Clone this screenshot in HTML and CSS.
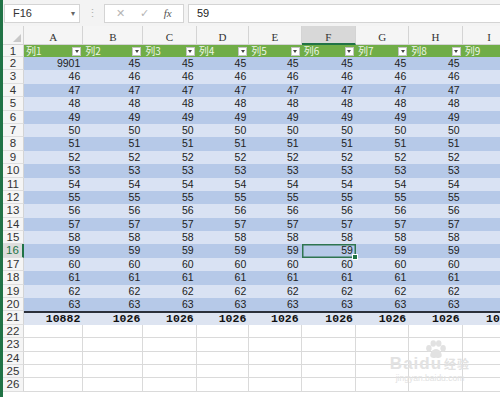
FILE: index.html
```html
<!DOCTYPE html>
<html lang="zh">
<head>
    <meta charset="UTF-8">
    <title>Sheet</title>
    <link rel="stylesheet" href="styles.css">
</head>
<body>
<div class="app">
    <!-- formula bar -->
    <div class="topbar">
        <div class="namebox"><span>F16</span><span class="caret">&#9662;</span></div>
        <div class="grip">&#8942;</div>
        <div class="fxbox"><span>&#10005;</span><span>&#10003;</span><i>fx</i></div>
        <div class="formula">59</div>
    </div>
    <!-- grid is filled by the script below -->
    <div class="sheet" id="sheet"></div>
    <div class="watermark">
        <svg class="paw" width="24" height="20" viewBox="0 0 22 18">
            <ellipse cx="4.5" cy="7.5" rx="2.5" ry="3" fill="#e2e2e2"/>
            <ellipse cx="8.5" cy="3" rx="2.5" ry="3" fill="#e2e2e2"/>
            <ellipse cx="13.5" cy="3" rx="2.5" ry="3" fill="#e2e2e2"/>
            <ellipse cx="17.5" cy="7.5" rx="2.5" ry="3" fill="#e2e2e2"/>
            <path d="M11 8 C7 8 5 13 6 15 C7 17 10 16 11 16 C12 16 15 17 16 15 C17 13 15 8 11 8 Z" fill="#e2e2e2"/>
        </svg>
        <div class="wm-main">Bai<span class="du">du</span><span class="jy">经验</span></div>
        <div class="wm-sub">jingyan.baidu.com</div>
    </div>
</div>
<script>
    const letters = ["A", "B", "C", "D", "E", "F", "G", "H", "I"];
    const sheet = document.getElementById("sheet");

    function cell(cls, text) {
        const d = document.createElement("div");
        d.className = cls;
        if (text !== undefined) d.textContent = text;
        sheet.appendChild(d);
        return d;
    }

    // column letters
    const corner = cell("corner");
    corner.innerHTML = '<svg width="8" height="8" viewBox="0 0 8 8"><path d="M8 0 L8 8 L0 8 Z" fill="#c8c8c8"/></svg>';
    letters.forEach(function (l) {
        cell(l === "F" ? "colhead active" : "colhead", l);
    });

    for (let r = 1; r <= 26; r++) {
        cell(r === 16 ? "rowhead active" : "rowhead", r);
        letters.forEach(function (l, i) {
            if (r === 1) {
                const h = cell("th");
                h.innerHTML = '<span>列' + (i + 1) + '</span><b class="drop"></b>';
            } else if (r <= 20) {
                let v = 43 + r;
                if (r === 2) v = i === 0 ? 9901 : 45;
                let cls = r % 2 === 0 ? "td dark" : "td light";
                if (r === 16 && l === "F") cls += " sel";
                cell(cls, l === "I" ? "" : v);
            } else if (r === 21) {
                cell("td total", i === 0 ? 10882 : 1026);
            } else {
                cell("td empty");
            }
        });
    }
</script>
</body>
</html>
```

FILE: styles.css
```css
body {
    margin: 0;
    background: #fff;
    font-family: "Liberation Sans", Arial, sans-serif;
}

.app {
    position: relative;
    width: 497px;
    height: 397px;
    overflow: hidden;
    border-left: 3px solid #217346;
}

/* formula bar */
.topbar {
    height: 26px;
    display: flex;
    align-items: center;
    background: #f3f3f3;
    padding-left: 1px;
    box-sizing: border-box;
}

.namebox {
    width: 76px;
    height: 19px;
    box-sizing: border-box;
    background: #fff;
    border: 1px solid #d4d4d4;
    display: flex;
    align-items: center;
    justify-content: space-between;
    padding: 0 4px 0 8px;
    font-size: 11px;
    color: #333;
}

.namebox .caret {
    font-size: 8px;
    color: #666;
}

.grip {
    width: 24px;
    text-align: center;
    color: #b0b0b0;
    font-size: 11px;
}

.fxbox {
    width: 80px;
    height: 19px;
    box-sizing: border-box;
    background: #fff;
    border: 1px solid #d4d4d4;
    display: flex;
    align-items: center;
    justify-content: space-around;
    padding: 0 4px;
    color: #b5b5b5;
    font-size: 11px;
}

.fxbox i {
    font-family: "Liberation Serif", serif;
    color: #555;
    font-size: 11px;
}

.formula {
    flex: 1;
    height: 19px;
    margin-left: 4px;
    box-sizing: border-box;
    background: #fff;
    border: 1px solid #d4d4d4;
    border-right: none;
    padding-left: 8px;
    font-size: 11px;
    line-height: 17px;
    color: #222;
}

/* grid */
.sheet {
    display: grid;
    grid-template-columns: 21px 59.3px 60px 53.4px 52.6px 52.4px 54.3px 53.3px 53.4px 54px;
    grid-template-rows: 19px 12px repeat(25, 13.4px);
    width: 513.7px;
}

.corner {
    background: #f5f5f5;
    border-right: 1px solid #d4d4d4;
    border-bottom: 1px solid #d4d4d4;
    box-sizing: border-box;
    display: flex;
    align-items: flex-end;
    justify-content: flex-end;
    padding: 0 2px 2px 0;
}

.colhead {
    background: #f5f5f5;
    border-right: 1px solid #d4d4d4;
    border-bottom: 1px solid #d4d4d4;
    box-sizing: border-box;
    text-align: center;
    font-family: "Liberation Serif", serif;
    font-size: 11px;
    line-height: 22px;
    color: #333;
}

.colhead.active {
    background: #d8d8d8;
    border-bottom: 2px solid #217346;
}

.rowhead {
    background: #f5f5f5;
    border-right: 1px solid #d4d4d4;
    border-bottom: 1px solid #dedede;
    box-sizing: border-box;
    text-align: center;
    font-size: 11.5px;
    line-height: 13px;
    color: #333;
}

.rowhead.active {
    background: #dcdcdc;
    color: #217346;
    border-right: 2px solid #217346;
}

/* header row of the table */
.th {
    background: #70ad47;
    display: flex;
    align-items: center;
    justify-content: space-between;
    padding: 0 2px 0 2px;
    height: 12px;
}

.th span {
    font-family: "Noto Sans CJK SC", sans-serif;
    font-size: 10px;
    line-height: 12px;
    height: 12px;
    color: #eef6e6;
}

.drop {
    width: 9px;
    height: 9px;
    box-sizing: border-box;
    background: #fff;
    border: 1px solid #c4c4c4;
    display: flex;
    align-items: center;
    justify-content: center;
}

.drop::before {
    content: "";
    border-left: 2.5px solid transparent;
    border-right: 2.5px solid transparent;
    border-top: 3px solid #444;
}

.td {
    text-align: right;
    padding-right: 3px;
    font-size: 10.5px;
    line-height: 13.4px;
    color: #222;
    overflow: hidden;
    white-space: nowrap;
}

.td.dark {
    background: #b6c9e8;
}

.td.light {
    background: #d9e2f3;
}

.td.sel {
    position: relative;
    overflow: visible;
    box-shadow: inset 0 0 0 1.5px #2e7550;
}

.td.sel::after {
    content: "";
    position: absolute;
    right: -2px;
    bottom: -2px;
    width: 4px;
    height: 4px;
    background: #217346;
    border: 1px solid #fff;
}

.td.total {
    background: #dde4f1;
    border-top: 2px solid #2b303a;
    font-family: "Liberation Mono", monospace;
    font-weight: bold;
    font-size: 11.5px;
    line-height: 11px;
    color: #111;
    overflow: visible;
}

.td.empty {
    border-right: 1px solid #dadada;
    border-bottom: 1px solid #dadada;
}

/* baidu watermark */
.watermark {
    position: absolute;
    right: 22px;
    bottom: 13px;
    width: 96px;
    text-align: center;
    color: #e2e2e2;
}

.paw {
    display: block;
    margin: 0 0 -4px 42px;
}

.wm-main {
    font-size: 17px;
    font-weight: bold;
    line-height: 16px;
    letter-spacing: 1px;
}

.wm-main .jy {
    font-family: "Noto Sans CJK SC", sans-serif;
    font-size: 12px;
    margin-left: 2px;
}

.wm-sub {
    font-size: 8.5px;
    line-height: 12px;
}
```
